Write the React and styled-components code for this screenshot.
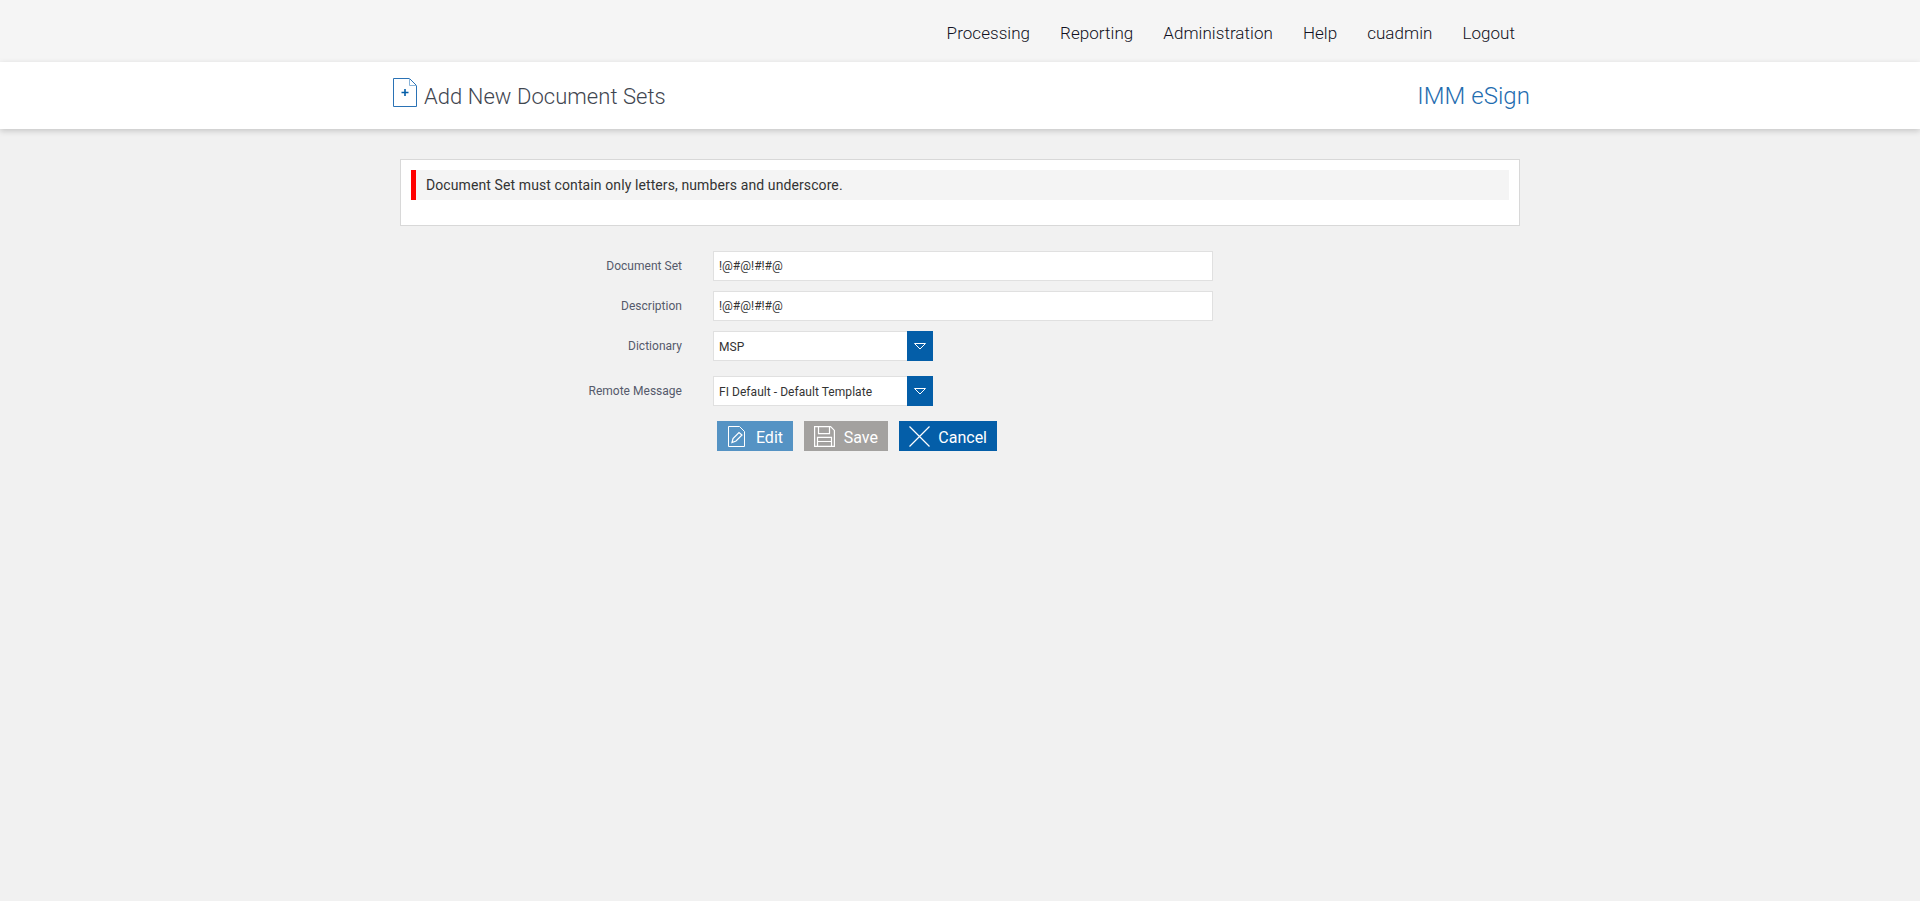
import React from 'react';
import styled, { createGlobalStyle } from 'styled-components';

const GlobalStyle = createGlobalStyle`
  html, body {
    margin: 0;
    padding: 0;
    height: 100%;
    background-color: #f1f1f1;
    font-family: Roboto, "Liberation Sans", sans-serif;
  }
`;

const TopBar = styled.div`
  height: 62px;
  background-color: #f5f5f5;
`;

const Container = styled.div`
  width: 1136px;
  margin: 0 auto;
`;

const Nav = styled(Container)`
  display: flex;
  justify-content: flex-end;
  align-items: center;
  gap: 30px;
  height: 62px;
  padding-right: 13px;
  box-sizing: border-box;
  padding-top: 3px;
`;

const NavLink = styled.a`
  font-size: 17px;
  font-weight: 300;
  letter-spacing: 0.05px;
  color: #111122;
`;

const Header = styled.div`
  height: 67px;
  background-color: #fff;
  box-shadow: 0 2px 6px rgba(0, 0, 0, 0.18);
`;

const HeaderInner = styled(Container)`
  display: flex;
  justify-content: space-between;
  align-items: center;
  height: 67px;
  padding: 0 0 0 1px;
  box-sizing: border-box;
`;

const Title = styled.div`
  display: flex;
  align-items: center;
  gap: 7px;
  font-size: 22px;
  font-weight: 300;
  letter-spacing: 0.05px;
  color: #3f4650;
`;

const TitleText = styled.span`
  padding-top: 2px;
`;

const TitleIcon = styled.svg`
  margin-top: -6px;
`;

const Brand = styled.div`
  margin-right: -2px;
  font-size: 24px;
  font-weight: 300;
  letter-spacing: 0.05px;
  color: #1f6db0;
`;

const Content = styled(Container)`
  padding: 30px 8px 0;
  box-sizing: border-box;
`;

const Alert = styled.div`
  height: 67px;
  box-sizing: border-box;
  padding: 10px;
  background-color: #fff;
  border: 1px solid #d8d8d8;
`;

const AlertMessage = styled.div`
  height: 30px;
  padding-left: 10px;
  line-height: 30px;
  font-size: 14px;
  letter-spacing: 0.1px;
  color: #333;
  background-color: #f4f4f4;
  border-left: 5px solid #ff0000;
`;

const Form = styled.div`
  padding-top: 25px;
  display: flex;
  flex-direction: column;
  align-items: flex-start;
`;

const Row = styled.div`
  display: flex;
  align-items: center;
  gap: 31px;
  margin-bottom: ${({ $gap }) => $gap}px;
`;

const Label = styled.label`
  width: 282px;
  text-align: right;
  font-size: 12px;
  letter-spacing: 0.02px;
  color: #555a6b;
`;

const Input = styled.div`
  width: 500px;
  height: 30px;
  box-sizing: border-box;
  padding-left: 5px;
  line-height: 28px;
  font-size: 12px;
  color: #333;
  background-color: #fff;
  border: 1px solid #e0e0e0;
`;

const Select = styled.div`
  display: flex;
  width: 220px;
  height: 30px;
`;

const SelectValue = styled.div`
  flex: 1;
  box-sizing: border-box;
  padding-left: 5px;
  line-height: 30px;
  font-size: 12px;
  letter-spacing: 0.05px;
  color: #333;
  background-color: #fff;
  border: 1px solid #e0e0e0;
  border-right: none;
`;

const SelectArrow = styled.div`
  display: flex;
  align-items: center;
  justify-content: center;
  width: 26px;
  background-color: #045ea8;
`;

const Buttons = styled.div`
  display: flex;
  gap: 11px;
  margin-left: 317px;
`;

const Button = styled.button`
  display: flex;
  align-items: center;
  justify-content: space-between;
  width: ${({ $width }) => $width}px;
  height: 30px;
  padding: 0 10px 0 ${({ $left }) => $left}px;
  border: none;
  color: #fff;
  font-family: inherit;
  font-size: 16px;
  background-color: ${({ $bg }) => $bg};
`;

const ButtonLabel = styled.span`
  padding-top: 2px;
`;

const DocAddIcon = () => (
  <TitleIcon width="24" height="29" viewBox="0 0 24 29" fill="none">
    <path d="M.5.500h16l7 7v21H.5z" stroke="#2a72b5" />
    <path d="M16.500.500v7h7" stroke="#8ab4d8" />
    <path d="M12 11v7M8.500 14.500h7" stroke="#045ea8" strokeWidth="1.600" />
  </TitleIcon>
);

const ArrowIcon = () => (
  <svg width="12" height="7" viewBox="0 0 12 7" fill="none">
    <path d="M.5.500h11L6 6z" stroke="#fff" />
  </svg>
);

const EditIcon = () => (
  <svg width="17" height="21" viewBox="0 0 17 21" fill="none" stroke="#fff">
    <path d="M.5.500h11l5 5v15H.5z" />
    <path d="M4 16.500l1-4 6-6 3 2.500-6 6z" strokeWidth="1.200" />
  </svg>
);

const SaveIcon = () => (
  <svg width="21" height="21" viewBox="0 0 21 21" fill="none" stroke="#fff" strokeWidth="1.200">
    <path d="M.6.600h16l3.800 3.800v16H.6z" />
    <path d="M4.500.600v7h11v-7M3.500 20.400v-9h14v9M3.500 15.500h14" />
  </svg>
);

const CancelIcon = () => (
  <svg width="21" height="21" viewBox="0 0 21 21" fill="none" stroke="#fff" strokeWidth="1.200">
    <path d="M.5.500l20 20M20.500.500l-20 20" />
  </svg>
);

const navItems = ['Processing', 'Reporting', 'Administration', 'Help', 'cuadmin', 'Logout'];

const App = () => (
  <>
    <GlobalStyle />
    <TopBar>
      <Nav>
        {navItems.map((item) => (
          <NavLink key={item}>{item}</NavLink>
        ))}
      </Nav>
    </TopBar>
    <Header>
      <HeaderInner>
        <Title>
          <DocAddIcon />
          <TitleText>Add New Document Sets</TitleText>
        </Title>
        <Brand>IMM eSign</Brand>
      </HeaderInner>
    </Header>
    <Content>
      <Alert>
        <AlertMessage>Document Set must contain only letters, numbers and underscore.</AlertMessage>
      </Alert>
      <Form>
        <Row $gap={10}>
          <Label>Document Set</Label>
          <Input>!@#@!#!#@</Input>
        </Row>
        <Row $gap={10}>
          <Label>Description</Label>
          <Input>!@#@!#!#@</Input>
        </Row>
        <Row $gap={15}>
          <Label>Dictionary</Label>
          <Select>
            <SelectValue>MSP</SelectValue>
            <SelectArrow><ArrowIcon /></SelectArrow>
          </Select>
        </Row>
        <Row $gap={15}>
          <Label>Remote Message</Label>
          <Select>
            <SelectValue>FI Default - Default Template</SelectValue>
            <SelectArrow><ArrowIcon /></SelectArrow>
          </Select>
        </Row>
        <Buttons>
          <Button $bg="#5593c4" $left={11} $width={76}><EditIcon /><ButtonLabel>Edit</ButtonLabel></Button>
          <Button $bg="#a3a19f" $left={10} $width={84}><SaveIcon /><ButtonLabel>Save</ButtonLabel></Button>
          <Button $bg="#045ea8" $left={10} $width={98}><CancelIcon /><ButtonLabel>Cancel</ButtonLabel></Button>
        </Buttons>
      </Form>
    </Content>
  </>
);

export default App;
